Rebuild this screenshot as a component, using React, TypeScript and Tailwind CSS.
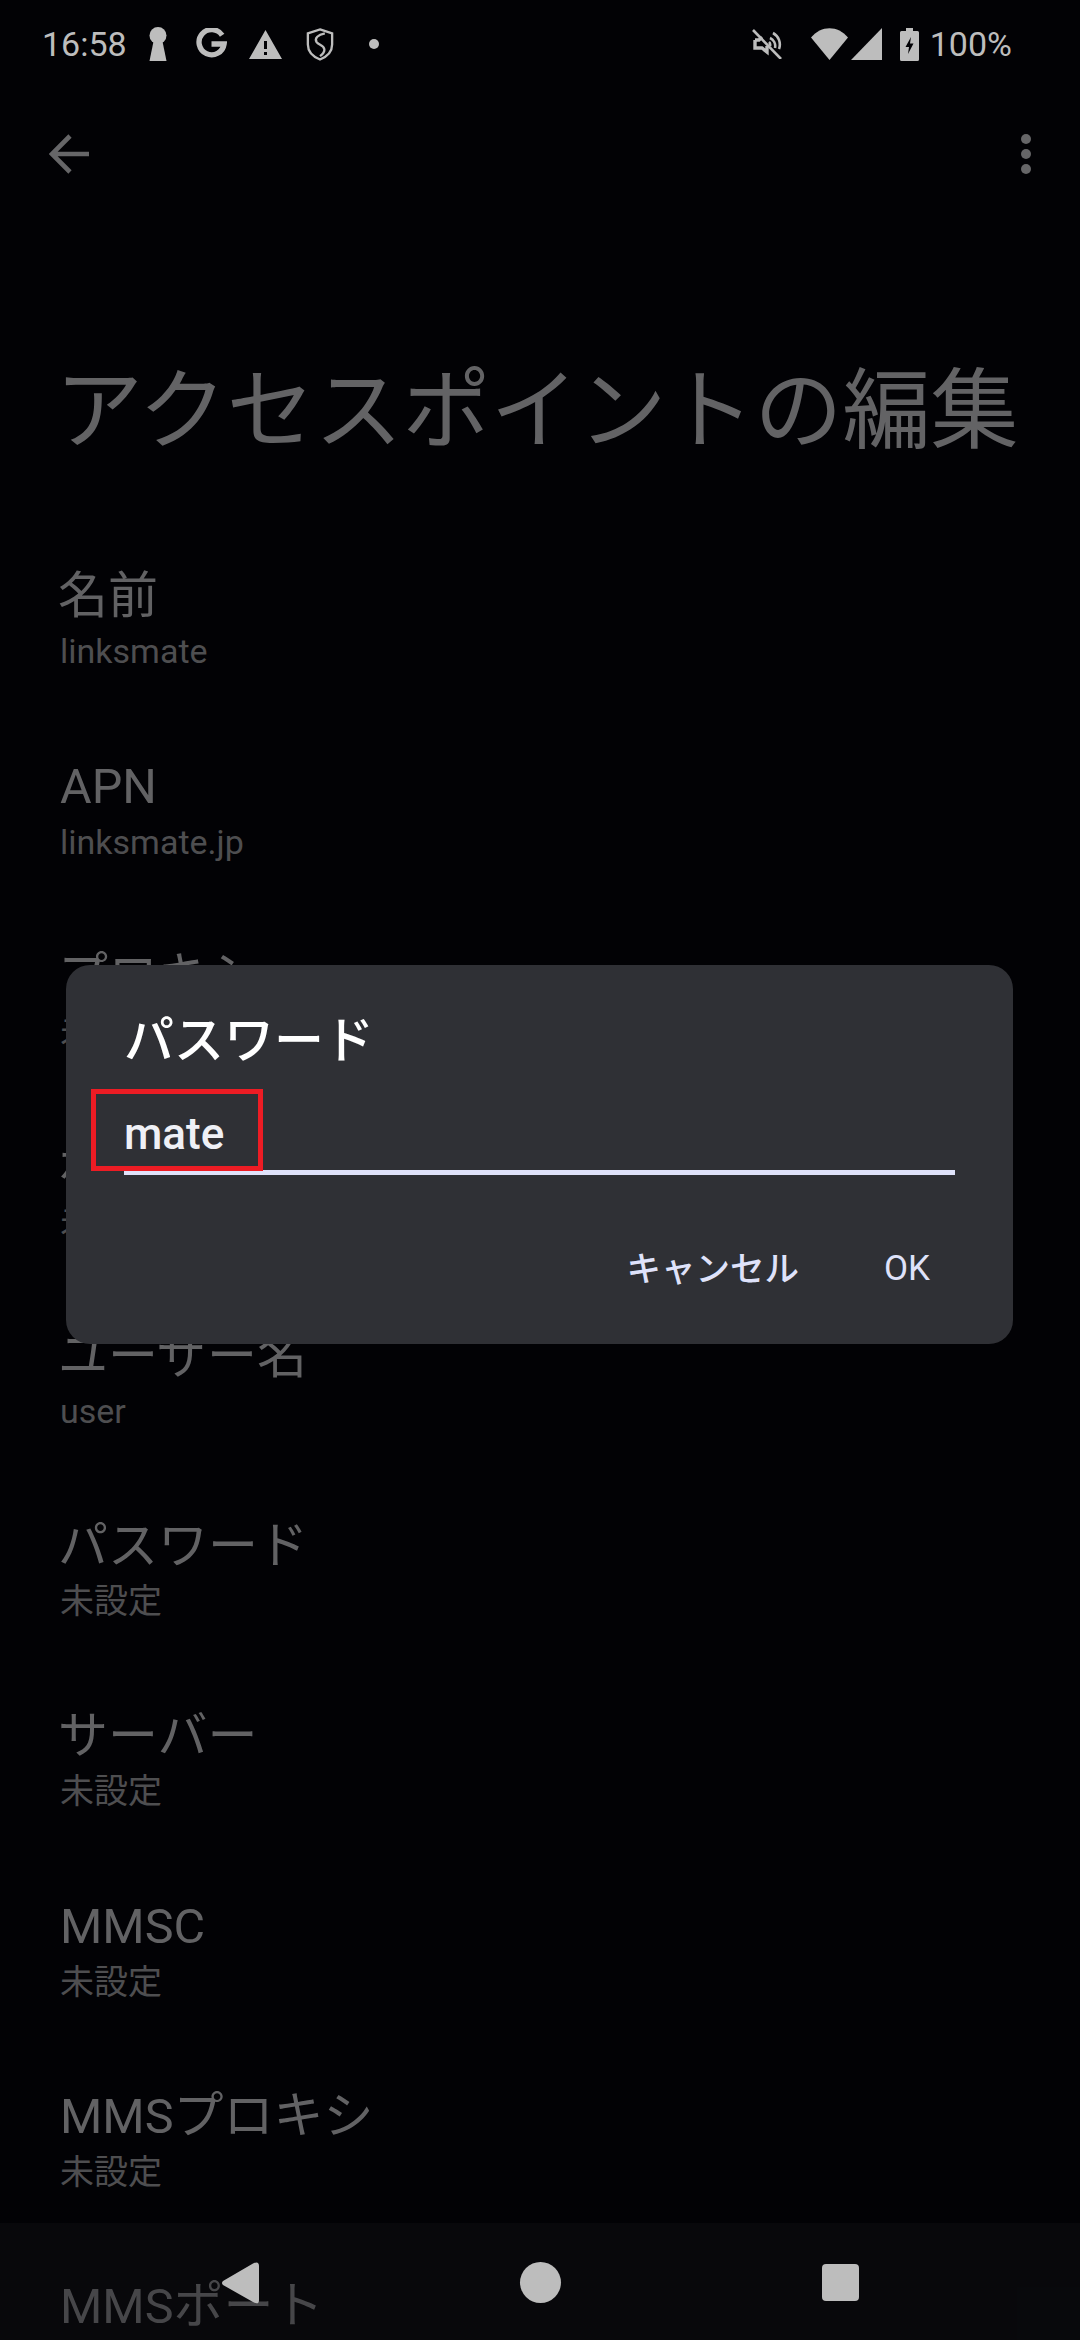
import React from "react";

const rows: [string, string, string][] = [
  ["", "名前", "linksmate"],
  ["APN", "", "linksmate.jp"],
  ["", "プロキシ", "未設定"],
  ["", "ポート", "未設定"],
  ["", "ユーザー名", "user"],
  ["", "パスワード", "未設定"],
  ["", "サーバー", "未設定"],
  ["MMSC", "", "未設定"],
  ["MMS", "プロキシ", "未設定"],
  ["MMS", "ポート", "未設定"],
];

const FONT = "font-['Roboto','Noto_Sans_CJK_JP',sans-serif]";

function StatusBar() {
  return (
    <div className="flex h-[88px] items-center justify-between pl-[42px] pr-[68px] text-[#bdbdbd]">
      <div className="flex items-center">
        <span className="w-[85px] text-[34px] leading-none">16:58</span>
        <svg width="18" height="34" viewBox="0 0 18 34" className="ml-[22px]" fill="currentColor">
          <circle cx="9" cy="8.500" r="8.500" />
          <path d="M5 12h8l4.500 22H0.500z" />
        </svg>
        <svg width="31" height="32" viewBox="0 0 32 32" className="ml-[29px]" fill="none" stroke="currentColor" strokeWidth="5.500">
          <path d="M27 7A13 13 0 1 0 29 16H16" />
        </svg>
        <svg width="33" height="29" viewBox="0 0 33 29" className="ml-[22px]" fill="currentColor">
          <path fillRule="evenodd" d="M16.500 0L33 29H0zM15 11v8h3v-8zM15 22v3h3v-3z" />
        </svg>
        <svg width="28" height="33" viewBox="0 0 28 34" className="ml-[24px]" fill="none" stroke="currentColor" strokeWidth="2.400">
          <path d="M14 1.500L26.500 5.500V17C26.500 25 20 30 14 32.500C8 30 1.500 25 1.500 17V5.500Z" />
          <path d="M19 5.500C12 7 8 10.500 10.500 14.500C12.500 17.500 18 18 18.500 22C18.800 25 16 27.500 14 29" />
        </svg>
        <span className="ml-[35px] size-[10px] rounded-full bg-current" />
      </div>
      <div className="flex items-center">
        <svg width="30" height="30" viewBox="0 0 30 30" fill="none" stroke="currentColor" strokeWidth="2.600">
          <path d="M1 1L29 30" />
          <path d="M3 11h4l3-3M15 17v6l-5-4H3v-8" strokeWidth="3.400" />
          <path d="M18 9a9 9 0 0 1 5 10M21 4a13 13 0 0 1 6 16M17 13a4 4 0 0 1 1 4" />
        </svg>
        <svg width="37" height="32" viewBox="0 0 37 32" className="ml-[29px]" fill="currentColor">
          <path d="M0 9.500C10 -3 27 -3 37 9.500L18.500 32Z" />
        </svg>
        <svg width="31" height="32" viewBox="0 0 31 32" className="ml-[3px]" fill="currentColor">
          <path d="M31 0V32H0Z" />
        </svg>
        <svg width="19" height="33" viewBox="0 0 19 33" className="ml-[18px]" fill="currentColor">
          <path fillRule="evenodd" d="M6 0h7v3h4.500q1.500 0 1.500 1.500V31.500q0 1.500 -1.500 1.500H1.500q-1.500 0 -1.500 -1.500V4.500Q0 3 1.500 3H6ZM11 9L5.500 19H9L8 26L13.500 15.500H10Z" />
        </svg>
        <span className="ml-[11px] text-[34px] leading-none">100%</span>
      </div>
    </div>
  );
}

function AppBar() {
  return (
    <div className="mt-[46px] flex h-[40px] items-center justify-between pl-[49px] pr-[49px] text-[#666668]">
      <svg width="40" height="40" viewBox="0 0 40 40" fill="none" stroke="currentColor" strokeWidth="4.600">
        <path d="M40 20H3M21 2L3 20L21 38" />
      </svg>
      <div className="flex flex-col gap-[5px]">
        <span className="size-[10px] rounded-full bg-current" />
        <span className="size-[10px] rounded-full bg-current" />
        <span className="size-[10px] rounded-full bg-current" />
      </div>
    </div>
  );
}

export default function App() {
  return (
    <div className={`relative h-[2340px] w-[1080px] overflow-hidden bg-[#020205] ${FONT}`}>
      <StatusBar />
      <AppBar />
      <h1 className="mt-[187px] pl-[55px] text-[88px] font-normal leading-[100px] text-[#636365] whitespace-nowrap">
        アクセスポイントの編集
      </h1>
      <div className="mt-[103px] pl-[58px]">
        {rows.map(([latin, cjk, s], i) => (
          <div key={i} className="h-[190px] whitespace-nowrap">
            <div className="text-[50px] leading-[64px] text-[#626264]">
              {latin && <span className="ml-[2px] text-[48.5px]">{latin}</span>}
              {cjk}
            </div>
            <div className="mt-[1px] pl-[2px] text-[34px] leading-[44px] text-[#4e4e50]">{s}</div>
          </div>
        ))}
      </div>

      <div className="absolute left-[66px] top-[965px] h-[379px] w-[947px] rounded-[24px] bg-[#2f3035] px-[58px]">
        <div className="mt-[44px] text-[50px] font-medium leading-[64px] text-white">パスワード</div>
        <div className="relative mt-[38px] h-[64px] border-b-[5px] border-[#dfe2fa]">
          <span className="relative top-[-6px] text-[44px] font-medium leading-[58px] text-[#eff0f6]">mate</span>
          <div className="absolute left-[-33px] top-[-22px] h-[82px] w-[172px] border-[5px] border-[#ed1c24]" />
        </div>
        <div className="mt-[70px] flex items-center justify-end gap-[85px] pr-[25px] leading-[48px] text-[#dfe2fa]">
          <span className="text-[34.5px] font-medium">キャンセル</span>
          <span className="text-[35px] font-normal">OK</span>
        </div>
      </div>

      <div className="absolute inset-x-0 bottom-0 h-[117px] bg-[#131518]/35">
        <svg width="38" height="42" viewBox="0 0 38 42" className="absolute left-[222px] top-[39px]" fill="#bdbdbd">
          <path d="M1 19L31 1.500Q37 -1.500 37 4V38Q37 43.500 31 40L1 23Q-1 21 1 19Z" />
        </svg>
        <span className="absolute left-[520px] top-[39px] size-[41px] rounded-full bg-[#bdbdbd]" />
        <span className="absolute left-[822px] top-[41px] size-[37px] rounded-[4px] bg-[#bdbdbd]" />
      </div>
    </div>
  );
}
